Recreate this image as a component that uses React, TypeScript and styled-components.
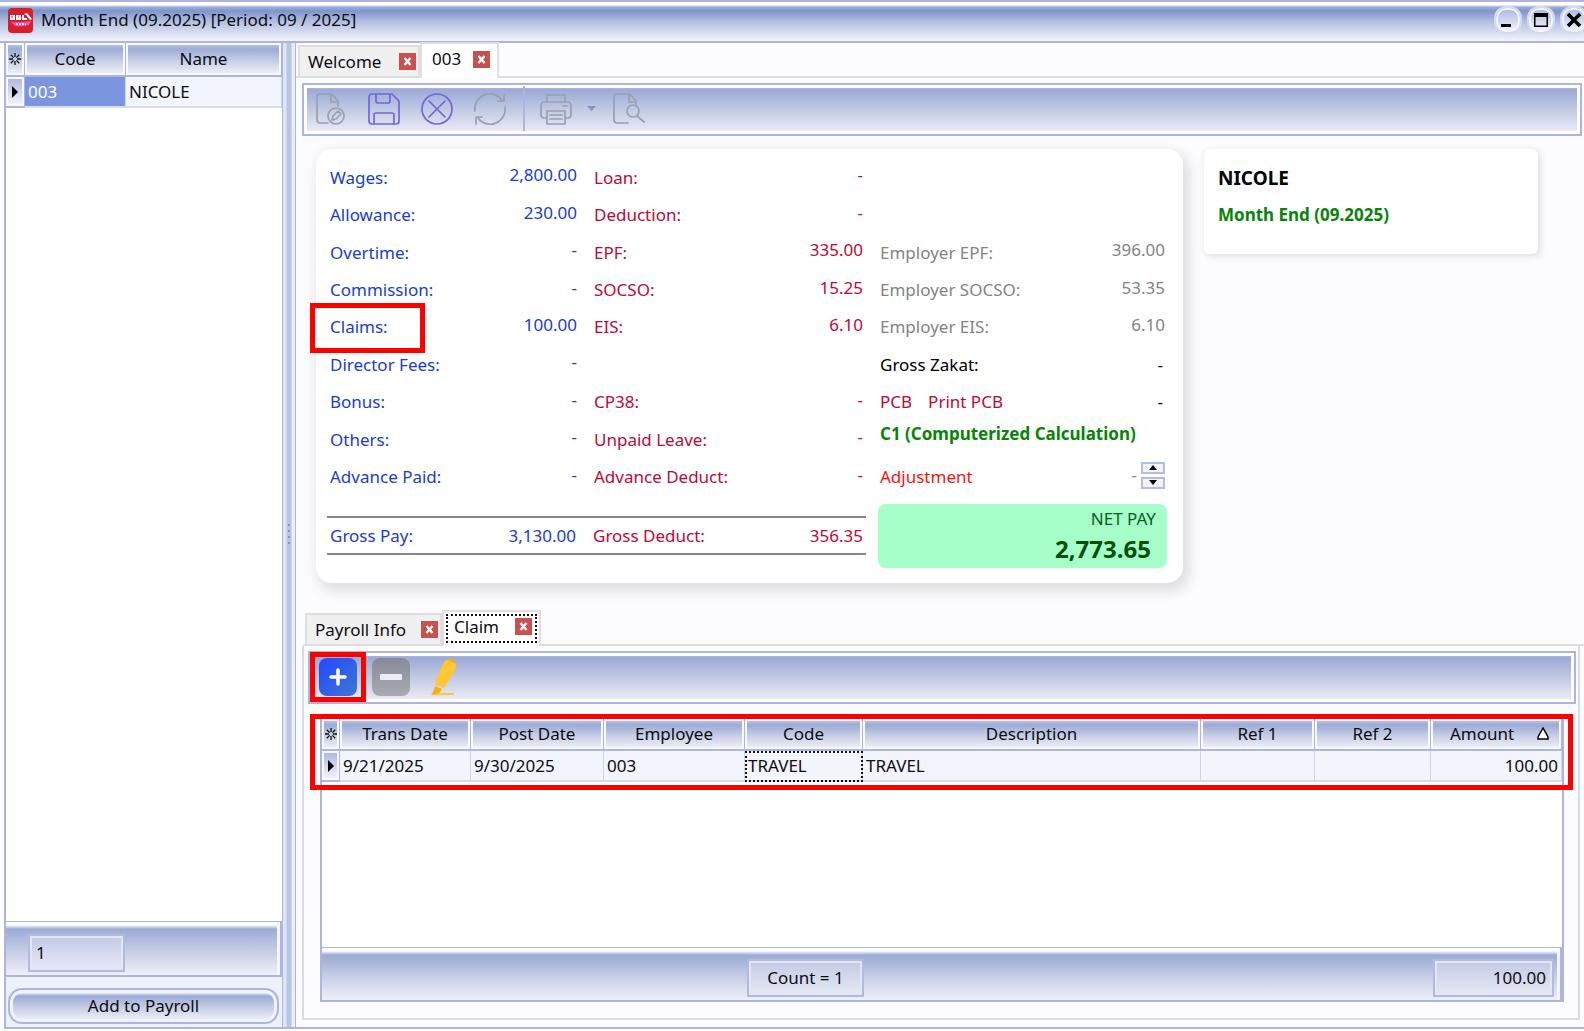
import React from "react";
import styled, { createGlobalStyle, css } from "styled-components";

const line = "#adb5de";
const bar = "linear-gradient(#b9c4e1 0, #9cabd6 5px, #a3b1d9 9px, #c6cee5 55%, #eeeff8 100%)";

const Global = createGlobalStyle`
  *, *::before, *::after { box-sizing: border-box; }
  body { margin: 0; background: #fff; }
  body, button, input, table { font-family: "Noto Sans", "Open Sans", sans-serif; font-size: 17px; line-height: 24px; color: #0c0c14; }
  button { padding: 0; border: 0; background: none; }
  svg { display: block; flex: none; }
`;

const Window = styled.div`
  display: flex;
  flex-direction: column;
  height: 100vh;
  min-height: 900px;
  min-width: 1300px;
  padding-bottom: 2px;
  overflow: hidden;
`;

const TitleBar = styled.header`
  display: flex;
  align-items: center;
  gap: 8px;
  flex: none;
  height: 43px;
  padding: 0 0 3px 8px;
  border-top: 2px solid ${line};
  border-bottom: 2px solid ${line};
  background: linear-gradient(#fff 0, #fff 3px, #9eaedb 5px, #7e94ca 9px, #b3bfe0 50%, #f2f4fb 100%);
`;

const Title = styled.h1`
  flex: 1;
  margin: 0;
  font-size: 17px;
  font-weight: 400;
`;

const WindowButtons = styled.div`
  display: flex;
  gap: 5px;
  margin-right: -4px;
`;

const WindowButton = styled.button`
  display: grid;
  place-items: center;
  width: 28px;
  height: 28px;
  border: 2px solid #d3d9ee;
  border-radius: 12px;
  background: linear-gradient(#a9b7dc, #f4f5fc);
  box-shadow: inset 0 0 0 2px #f2f4fc;
`;

const Body = styled.div`
  display: flex;
  flex: 1;
  min-height: 0;
  margin-left: 4px;
  border-left: 2px solid ${line};
  border-bottom: 2px solid ${line};
`;

const Sidebar = styled.aside`
  display: flex;
  flex-direction: column;
  flex: none;
  width: 277px;
  border-right: 1px solid ${line};
`;

const Grid = styled.table`
  width: 100%;
  border-collapse: separate;
  border-spacing: 0;
  table-layout: fixed;
`;

const HeadCell = styled.th<{ $side?: boolean; $sorted?: boolean }>`
  position: relative;
  height: ${(p) => (p.$side ? 34 : 32)}px;
  padding: 0 ${(p) => (p.$sorted ? 28 : 0)}px 0 0;
  font-weight: 400;
  border-right: 1px solid ${line};
  border-bottom: 2px solid ${line};
  background: linear-gradient(#c4cde6 0, #9cabd6 6px, #c6cee5 55%, #f1f2fa 100%);
  box-shadow: inset 0 0 0 2px #f8f9fd;
`;

const Cell = styled.td<{ $selected?: boolean; $right?: boolean; $focus?: boolean }>`
  height: 31px;
  padding: 0 3px;
  text-align: ${(p) => (p.$right ? "right" : "left")};
  color: ${(p) => (p.$selected ? "#fff" : "#0c0c14")};
  background: ${(p) => (p.$selected ? "#7b96de" : "#f2f5fb")};
  border-right: 1px solid #cdd6ec;
  border-bottom: 2px solid #d5dcf0;
  ${(p) => p.$focus && css`outline: 2px dotted #111; outline-offset: -2px;`}
`;

const MarkerCell = styled.td`
  padding: 0;
  border-right: 1px solid ${line};
  border-bottom: 2px solid ${line};
  background: linear-gradient(#a9b7dd, #f6f7fc);
  box-shadow: inset 0 0 0 2px #f8f9fd;
  svg { margin: 0 auto; }
`;

const SortMark = styled.span`
  position: absolute;
  right: 12px;
  top: 8px;
`;

const Spacer = styled.div`
  flex: 1;
  background: #fff;
`;

const FooterBar = styled.div<{ $size: number }>`
  display: flex;
  align-items: center;
  flex: none;
  height: ${(p) => p.$size}px;
  padding: 8px 8px 0 22px;
  border-top: 1px solid ${line};
  border-right: 2px solid ${line};
  border-bottom: 2px solid ${line};
  background: linear-gradient(#fff 0, #fff 3px, #9cabd6 7px, #a3b1d9 11px, #c6cee5 55%, #eeeff8 100%);
  box-shadow: inset -3px 0 0 #f4f6fc;
`;

const Total = styled.output<{ $w: number; $align: string }>`
  flex: none;
  width: ${(p) => p.$w}px;
  height: 38px;
  padding: 5px 6px;
  text-align: ${(p) => p.$align};
  border: 2px solid #b3badf;
  background: linear-gradient(#c2cae4, #e7e9f5);
  box-shadow: inset 0 0 0 2px #e3e6f4;
`;

const ActionArea = styled.div`
  padding: 11px 3px 3px 2px;
  background: #edf1f9;
`;

const PillButton = styled.button`
  display: block;
  width: 100%;
  height: 36px;
  border: 2px solid ${line};
  border-radius: 14px;
  background: linear-gradient(#fff 0, #fff 2px, #9cabd6 6px, #c6cee5 55%, #f4f5fc 100%);
  box-shadow: inset 0 0 0 3px #f0f3fb;
`;

const Splitter = styled.div`
  display: grid;
  place-items: center;
  flex: none;
  width: 13px;
  border-right: 1px solid ${line};
  background: linear-gradient(90deg, #dfe5f4 0 3px, #b9c6e3 4px 8px, #e9eefa 9px);
`;

const Grip = styled.div`
  width: 2px;
  height: 22px;
  background: repeating-linear-gradient(#8794bb 0 2px, transparent 2px 6px);
`;

const Main = styled.main`
  display: flex;
  flex-direction: column;
  flex: 1;
  min-width: 0;
  background: #fcfcfe;
`;

const TabStrip = styled.div<{ $inner?: boolean }>`
  display: flex;
  align-items: flex-end;
  flex: none;
  height: ${(p) => (p.$inner ? 36 : 35)}px;
  margin: ${(p) => (p.$inner ? "0 0 0 7px" : "0")};
  padding-left: 2px;
  border-bottom: 2px solid #dcdcdc;
`;

const Tab = styled.div<{ $active?: boolean; $w: number }>`
  display: flex;
  align-items: center;
  justify-content: space-between;
  width: ${(p) => p.$w}px;
  height: 31px;
  padding: 0 2px 0 8px;
  border: 2px solid #dedede;
  border-bottom: 0;
  background: #f0f0f0;
  ${(p) => p.$active && css`
    height: 36px;
    margin: 0 0 -2px;
    padding: 0 7px 4px 10px;
    background: #fff;
  `}
`;

const FocusFrame = styled.div`
  display: flex;
  align-items: center;
  justify-content: space-between;
  width: 100%;
  height: 29px;
  padding: 0 3px 4px 6px;
  border: 2px dotted #111;
`;

const FocusTab = styled(Tab)`
  padding: 2px 2px 3px;
`;

const Close = styled.button`
  display: grid;
  place-items: center;
  width: 17px;
  height: 17px;
  background: #c8504f;
`;

const Toolbar = styled.div`
  display: flex;
  align-items: center;
  flex: none;
  height: 53px;
  padding-bottom: 2px;
  border: 2px solid ${line};
  background: ${bar};
  box-shadow: inset 0 0 0 3px #fff;
`;

const MainToolbar = styled(Toolbar)`
  margin: 5px 2px 0 6px;
`;

const Tool = styled.button<{ $w?: number }>`
  display: grid;
  place-items: center;
  width: ${(p) => p.$w ?? 53}px;
  height: 40px;
`;

const Divider = styled.span`
  width: 2px;
  height: 45px;
  margin: 0 4px 0 7px;
  background: ${line};
`;

const Overview = styled.div`
  display: flex;
  align-items: flex-start;
  gap: 21px;
  flex: none;
  padding: 13px 16px 27px 20px;
`;

const Card = styled.section`
  flex: 0 1 867px;
  min-width: 800px;
  height: 434px;
  padding: 10px 16px 0 11px;
  border-radius: 16px;
  background: #fff;
  box-shadow: 4px 6px 14px 2px #dcdcdf;
`;

const Columns = styled.div`
  display: grid;
  grid-template-columns: 252px 274px 1fr;
  gap: 12px;
`;

const Column = styled.div<{ $tone: string }>`
  display: grid;
  grid-template-rows: repeat(9, 1fr);
  height: 337px;
  padding-left: 3px;
  color: ${(p) => p.$tone};
`;

const Entry = styled.div<{ $tone?: string }>`
  display: flex;
  align-items: center;
  justify-content: space-between;
  color: ${(p) => p.$tone ?? "inherit"};
`;

const Value = styled.span<{ $level?: boolean }>`
  padding-bottom: ${(p) => (p.$level ? 0 : 5)}px;
  margin-right: ${(p) => (p.$level ? 4 : 2)}px;
`;

const Marked = styled.span`
  position: relative;
  &::after {
    content: "";
    position: absolute;
    inset: -12px -37px -14px -20px;
    border: 5px solid #f00;
    pointer-events: none;
  }
`;

const PrintLink = styled.span`
  margin-left: 16px;
`;

const Method = styled.strong`
  align-self: center;
  padding-bottom: 12px;
  color: #078407;
  white-space: nowrap;
`;

const Spin = styled.span`
  display: flex;
  align-items: center;
  gap: 4px;
  padding: 0 2px 4px 0;
`;

const Steps = styled.span`
  display: grid;
  gap: 3px;
`;

const Step = styled.button`
  display: grid;
  place-items: center;
  width: 24px;
  height: 12px;
  border: 2px solid #b4bce3;
  background: #f2f4fc;
`;

const Totals = styled.div`
  display: grid;
  grid-template-columns: 539px 1fr;
  gap: 12px;
  margin-top: 8px;
`;

const Gross = styled.div`
  display: grid;
  grid-template-columns: 246px 1fr;
  gap: 17px;
  height: 39px;
  margin-top: 12px;
  padding: 0 3px;
  border-top: 2px solid #858585;
  border-bottom: 2px solid #858585;
`;

const NetPay = styled.div`
  display: flex;
  flex-direction: column;
  align-items: flex-end;
  height: 64px;
  padding: 3px 11px;
  border-radius: 8px;
  background: #a6ffc8;
  color: #0c5c20;
  strong { padding-right: 5px; font-size: 24px; line-height: 36px; color: #045008; }
`;

const Profile = styled.section`
  flex: 0 1 334px;
  height: 105px;
  padding: 17px 14px;
  border-radius: 6px;
  background: #fff;
  box-shadow: 2px 2px 6px 1px #e2e2e4;
`;

const Name = styled.h2`
  margin: 0 0 13px;
  font-size: 19px;
  line-height: 24px;
  color: #000;
`;

const Period = styled.p`
  margin: 0;
  font-weight: 700;
  color: #078407;
`;

const DetailPage = styled.section`
  display: flex;
  flex-direction: column;
  flex: 1;
  min-height: 0;
  margin: 0 4px 7px 6px;
  padding: 5px 2px 16px 4px;
  border: solid #dcdcdc;
  border-width: 0 2px 2px;
`;

const DetailToolbar = styled(Toolbar)`
  padding-left: 9px;
  gap: 10px;
`;

const SquareButton = styled.button<{ $muted?: boolean; $marked?: boolean }>`
  position: relative;
  display: grid;
  place-items: center;
  width: 38px;
  height: 38px;
  margin-right: 5px;
  border-radius: 8px;
  background: ${(p) => (p.$muted ? "linear-gradient(#878a98, #a9abb2)" : "linear-gradient(135deg, #2348ff, #3d78d2)")};
  ${(p) => p.$marked && css`
    &::after {
      content: "";
      position: absolute;
      inset: -6px -9px;
      border: 5px solid #f00;
      pointer-events: none;
    }
  `}
`;

const GridFrame = styled.div`
  position: relative;
  display: flex;
  flex-direction: column;
  flex: 1;
  min-height: 0;
  margin: 15px 12px 0;
  border-left: 2px solid ${line};
  border-right: 2px solid ${line};
  &::after {
    content: "";
    position: absolute;
    top: -5px;
    left: -12px;
    right: -11px;
    height: 76px;
    border: 5px solid #f00;
    pointer-events: none;
  }
`;

const GridFooter = styled(FooterBar)`
  justify-content: space-between;
  padding-left: 425px;
  padding-right: 6px;
`;

const Asterisk = () => (
  <svg width="18" height="14" viewBox="0 0 18 14" fill="none" stroke="#111" strokeWidth="1.3" aria-label="All rows">
    <path d="M9 1v4M9 9v4M3 7h4M11 7h4M4.8 2.8l2.8 2.8M10.4 8.4l2.8 2.8M13.2 2.8l-2.8 2.8M7.6 8.4l-2.8 2.8" />
  </svg>
);

const Pointer = () => (
  <svg width="8" height="12" viewBox="0 0 8 12"><path d="M1 0l6 6-6 6z" fill="#000" /></svg>
);

const CloseTab = ({ label }: { label: string }) => (
  <Close aria-label={`Close ${label}`}>
    <svg width="9" height="9" viewBox="0 0 9 9" stroke="#fff" strokeWidth="2.4"><path d="M1.500 1l6 7M7.500 1l-6 7" /></svg>
  </Close>
);

const Line = ({ children, color = "#9a9fb2" }: { children: React.ReactNode; color?: string }) => (
  <svg width="34" height="34" viewBox="0 0 34 34" fill="none" stroke={color} strokeWidth="1.7" strokeLinecap="round" strokeLinejoin="round">{children}</svg>
);

type Item = { label?: string; value?: string; marked?: boolean };

const earnings: Item[] = [
  { label: "Wages:", value: "2,800.00" },
  { label: "Allowance:", value: "230.00" },
  { label: "Overtime:", value: "-" },
  { label: "Commission:", value: "-" },
  { label: "Claims:", value: "100.00", marked: true },
  { label: "Director Fees:", value: "-" },
  { label: "Bonus:", value: "-" },
  { label: "Others:", value: "-" },
  { label: "Advance Paid:", value: "-" },
];

const deductions: Item[] = [
  { label: "Loan:", value: "-" },
  { label: "Deduction:", value: "-" },
  { label: "EPF:", value: "335.00" },
  { label: "SOCSO:", value: "15.25" },
  { label: "EIS:", value: "6.10" },
  {},
  { label: "CP38:", value: "-" },
  { label: "Unpaid Leave:", value: "-" },
  { label: "Advance Deduct:", value: "-" },
];

const employer: Item[] = [
  {},
  {},
  { label: "Employer EPF:", value: "396.00" },
  { label: "Employer SOCSO:", value: "53.35" },
  { label: "Employer EIS:", value: "6.10" },
];

const Entries = ({ items }: { items: Item[] }) => (
  <>
    {items.map((item, i) => (
      <Entry key={i}>
        {item.marked ? <Marked>{item.label}</Marked> : <span>{item.label}</span>}
        <Value>{item.value}</Value>
      </Entry>
    ))}
  </>
);

const columns: [string, number | undefined][] = [
  ["Trans Date", 131], ["Post Date", 133], ["Employee", 141], ["Code", 118],
  ["Description", undefined], ["Ref 1", 114], ["Ref 2", 116], ["Amount", 131],
];

export default function App() {
  return (
    <Window>
      <Global />
      <TitleBar>
        <svg width="25" height="25" viewBox="0 0 25 25" aria-label="SQL Payroll">
          <rect width="25" height="25" rx="4" fill="#d71f2b" />
          <path d="M2 7h5v5H2zM8 7h5v5H8zM14 7h2v3h3v2h-5zM16 6l3-1 5 6-2 1-4-5z" fill="#fff" />
          <path d="M3 9h2M10 9h1" stroke="#d71f2b" />
          <path d="M3 14q9 1 20-1l-2 4q-8 2-14 1z" fill="#f45aa4" />
          <path d="M8 16h10" stroke="#fff" strokeWidth="1.3" strokeDasharray="2 1" />
        </svg>
        <Title>Month End (09.2025) [Period: 09 / 2025]</Title>
        <WindowButtons>
          <WindowButton aria-label="Minimize">
            <svg width="16" height="16" viewBox="0 0 16 16"><path d="M1 12h10v3H1z" /></svg>
          </WindowButton>
          <WindowButton aria-label="Maximize">
            <svg width="16" height="16" viewBox="0 0 16 16"><path d="M1 1h14v14H1zM2.500 5v8.500h11V5z" fillRule="evenodd" /></svg>
          </WindowButton>
          <WindowButton aria-label="Close">
            <svg width="16" height="16" viewBox="0 0 16 16" stroke="#000" strokeWidth="3.500"><path d="M2 2l12 12M14 2L2 14" /></svg>
          </WindowButton>
        </WindowButtons>
      </TitleBar>

      <Body>
        <Sidebar>
          <Grid>
            <colgroup><col width="19" /><col width="101" /><col /></colgroup>
            <thead>
              <tr>
                <HeadCell $side><Asterisk /></HeadCell>
                <HeadCell $side>Code</HeadCell>
                <HeadCell $side>Name</HeadCell>
              </tr>
            </thead>
            <tbody>
              <tr>
                <MarkerCell><Pointer /></MarkerCell>
                <Cell $selected>003</Cell>
                <Cell>NICOLE</Cell>
              </tr>
            </tbody>
          </Grid>
          <Spacer />
          <FooterBar $size={56}><Total $w={97} $align="left">1</Total></FooterBar>
          <ActionArea><PillButton>Add to Payroll</PillButton></ActionArea>
        </Sidebar>
        <Splitter><Grip /></Splitter>

        <Main>
          <TabStrip>
            <Tab $w={122}><button>Welcome</button><CloseTab label="Welcome" /></Tab>
            <Tab $active $w={79}><button>003</button><CloseTab label="003" /></Tab>
          </TabStrip>

          <MainToolbar>
            <Tool aria-label="Edit document">
              <Line><path d="M14 31H6q-3 0-3-3V5q0-3 3-3h12l6 7v5M17 2v8h7" /><circle cx="22" cy="24" r="8" /><path d="M18 28l1-4 5-5 3 3-5 5z" /></Line>
            </Tool>
            <Tool aria-label="Save">
              <Line color="#7564da"><path d="M5 2h20l7 7v20q0 3-3 3H5q-3 0-3-3V5q0-3 3-3zM9 2v7q0 2 2 2h10q2 0 2-2V2M7 32V23q0-2 2-2h16q2 0 2 2v9" /></Line>
            </Tool>
            <Tool aria-label="Cancel">
              <Line color="#7564da"><circle cx="17" cy="17" r="15" /><path d="M9 9l16 16M25 9L9 25" /></Line>
            </Tool>
            <Tool aria-label="Refresh">
              <Line><path d="M2 19A15 15 0 0 1 29 8M31 3v6h-6M32 15A15 15 0 0 1 5 26M3 32v-7h6" /></Line>
            </Tool>
            <Divider />
            <Tool aria-label="Print">
              <Line><path d="M8 10V3h18v7M8 26H5q-3 0-3-3V14q0-4 4-4h22q4 0 4 4v9q0 3-3 3h-3M8 19h18v13H8zM11 23h12M11 27h12M24 14h4" /></Line>
            </Tool>
            <Tool $w={19} aria-label="Print options">
              <svg width="9" height="5" viewBox="0 0 9 5"><path d="M0 0h9L4.500 5z" fill="#8992bd" /></svg>
            </Tool>
            <Tool aria-label="Preview">
              <Line><path d="M17 31H6q-3 0-3-3V5q0-3 3-3h13l6 7v3M18 2v8h7M26 24l7 6" /><circle cx="22" cy="19" r="6" /></Line>
            </Tool>
          </MainToolbar>

          <Overview>
            <Card>
              <Columns>
                <Column $tone="#1a3ccb"><Entries items={earnings} /></Column>
                <Column $tone="#bd0834"><Entries items={deductions} /></Column>
                <Column $tone="#838383">
                  <Entries items={employer} />
                  <Entry $tone="#000"><span>Gross Zakat:</span><Value $level>-</Value></Entry>
                  <Entry $tone="#bd0834">
                    <span>PCB<PrintLink>Print PCB</PrintLink></span>
                    <Entry $tone="#000"><Value $level>-</Value></Entry>
                  </Entry>
                  <Method>C1 (Computerized Calculation)</Method>
                  <Entry>
                    <Entry $tone="#ff1010">Adjustment</Entry>
                    <Spin>
                      -
                      <Steps>
                        <Step aria-label="Increase"><svg width="8" height="5" viewBox="0 0 8 5"><path d="M0 5l4-5 4 5z" /></svg></Step>
                        <Step aria-label="Decrease"><svg width="8" height="5" viewBox="0 0 8 5"><path d="M0 0h8L4 5z" /></svg></Step>
                      </Steps>
                    </Spin>
                  </Entry>
                </Column>
              </Columns>
              <Totals>
                <Gross>
                  <Entry $tone="#1a3ccb"><span>Gross Pay:</span><span>3,130.00</span></Entry>
                  <Entry $tone="#bd0834"><span>Gross Deduct:</span><span>356.35</span></Entry>
                </Gross>
                <NetPay><span>NET PAY</span><strong>2,773.65</strong></NetPay>
              </Totals>
            </Card>
            <Profile>
              <Name>NICOLE</Name>
              <Period>Month End (09.2025)</Period>
            </Profile>
          </Overview>

          <TabStrip $inner>
            <Tab $w={137}><button>Payroll Info</button><CloseTab label="Payroll Info" /></Tab>
            <FocusTab $active $w={99}>
              <FocusFrame><button>Claim</button><CloseTab label="Claim" /></FocusFrame>
            </FocusTab>
          </TabStrip>
          <DetailPage>
            <DetailToolbar>
              <SquareButton $marked aria-label="Add claim">
                <svg width="18" height="18" viewBox="0 0 18 18" stroke="#fff" strokeWidth="3.500" strokeLinecap="round"><path d="M9 2v14M2 9h14" /></svg>
              </SquareButton>
              <SquareButton $muted aria-label="Remove claim">
                <svg width="24" height="6" viewBox="0 0 24 6"><rect x="1" y="0" width="22" height="6" rx="1" fill="#ececf4" /></svg>
              </SquareButton>
              <Tool $w={38} aria-label="Highlight">
                <svg width="28" height="38" viewBox="0 0 28 38">
                  <path d="M2 35h22v2H1z" fill="#ffc83a" />
                  <path d="M5 28l7 3-3 4-7 2z" fill="#f9ab16" />
                  <path d="M18 0l7 3 0 4-8-2z" fill="#f9ab16" />
                  <path d="M14 4l3-2 9 4-1 6-11 18-8-3-1-3z" fill="#ffc733" />
                </svg>
              </Tool>
            </DetailToolbar>
            <GridFrame>
              <Grid>
                <colgroup>
                  <col width="18" />
                  {columns.map(([name, w]) => <col key={name} width={w} />)}
                </colgroup>
                <thead>
                  <tr>
                    <HeadCell><Asterisk /></HeadCell>
                    {columns.map(([name]) => (
                      <HeadCell key={name} $sorted={name === "Amount"}>
                        {name}
                        {name === "Amount" && (
                          <SortMark><svg width="12" height="13" viewBox="0 0 12 13" fill="#fff" stroke="#000" strokeWidth="1.500"><path d="M6 1L1 10v2h10v-2z" /></svg></SortMark>
                        )}
                      </HeadCell>
                    ))}
                  </tr>
                </thead>
                <tbody>
                  <tr>
                    <MarkerCell><Pointer /></MarkerCell>
                    <Cell>9/21/2025</Cell>
                    <Cell>9/30/2025</Cell>
                    <Cell>003</Cell>
                    <Cell $focus>TRAVEL</Cell>
                    <Cell>TRAVEL</Cell>
                    <Cell />
                    <Cell />
                    <Cell $right>100.00</Cell>
                  </tr>
                </tbody>
              </Grid>
              <Spacer />
              <GridFooter $size={55}>
                <Total $w={117} $align="center">Count = 1</Total>
                <Total $w={121} $align="right">100.00</Total>
              </GridFooter>
            </GridFrame>
          </DetailPage>
        </Main>
      </Body>
    </Window>
  );
}
